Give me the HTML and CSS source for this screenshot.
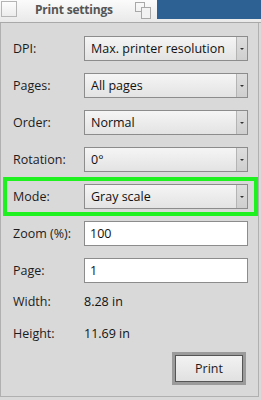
FILE: index.html
```html
<!DOCTYPE html>
<html>
<head>
<meta charset="utf-8">
<link rel="stylesheet" href="styles.css">
</head>
<body>
<div class="titlebar">
  <div class="tb-check"></div>
  <div class="tb-title">Print settings</div>
  <svg class="tb-icon" width="17" height="17" viewBox="0 0 17 17">
    <rect x="0.5" y="0.5" width="9" height="9" fill="none" stroke="#a8a8a8"/>
    <rect x="6.5" y="5.5" width="9" height="11" fill="#f2f2f2" stroke="#a8a8a8"/>
  </svg>
  <div class="tb-blue"></div>
</div>
<div class="panel">
  <div class="form">
    <div class="row"><span class="lbl">DPI:</span><div class="combo"><span class="val">Max. printer resolution</span><span class="btn"><i class="arrow"></i></span></div></div>
    <div class="row"><span class="lbl">Pages:</span><div class="combo"><span class="val">All pages</span><span class="btn"><i class="arrow"></i></span></div></div>
    <div class="row"><span class="lbl">Order:</span><div class="combo"><span class="val">Normal</span><span class="btn"><i class="arrow"></i></span></div></div>
    <div class="row"><span class="lbl">Rotation:</span><div class="combo"><span class="val">0°</span><span class="btn"><i class="arrow"></i></span></div></div>
    <div class="row hl"><span class="lbl">Mode:</span><div class="combo"><span class="val">Gray scale</span><span class="btn"><i class="arrow"></i></span></div></div>
    <div class="row"><span class="lbl">Zoom (%):</span><div class="input">100</div></div>
    <div class="row"><span class="lbl">Page:</span><div class="input">1</div></div>
    <div class="row info info-first"><span class="lbl">Width:</span><span class="ival">8.28 in</span></div>
    <div class="row info info-second"><span class="lbl">Height:</span><span class="ival">11.69 in</span></div>
  </div>
  <div class="actions"><button class="print">Print</button></div>
</div>
</body>
</html>
```
FILE: styles.css
```css
html, body {
  margin: 0;
  padding: 0;
  width: 261px;
  height: 400px;
  overflow: hidden;
  background: #d9d9d9;
  font-family: "Open Sans", "Noto Sans", sans-serif;
  font-size: 12.5px;
  color: #1c1c1c;
}
.titlebar {
  display: flex;
  align-items: flex-start;
  height: 22px;
  background: linear-gradient(#fbfbfb, #e9e9e9);
  border-bottom: 1px solid #a9a9a9;
  box-sizing: content-box;
}
.tb-check {
  width: 14px;
  height: 14px;
  margin: 1px 0 0 1px;
  border: 1px solid #b5b5b5;
  background: linear-gradient(#fdfdfd, #ececec);
}
.tb-title {
  margin-left: 18px;
  margin-top: 1px;
  font-weight: bold;
  font-size: 12px;
  letter-spacing: -0.2px;
  color: #555;
  width: 100px;
  flex: none;
}
.tb-icon {
  margin-top: 2px;
  flex: none;
}
.tb-blue {
  flex: 1;
  height: 19px;
  margin-left: 5px;
  background: #2e6193;
}
.panel {
  height: 374px;
  width: 259px;
  border: 1px solid #b0b0b0;
  border-top: none;
  box-sizing: border-box;
  display: flex;
  flex-direction: column;
  padding: 13px 11px 0 11px;
}
.form {
  display: flex;
  flex-direction: column;
  gap: 12px;
}
.row {
  display: grid;
  grid-template-columns: 71px 164px;
  align-items: center;
  height: 25px;
  padding-left: 1px;
}
.lbl {
  color: #1c1c1c;
}
.combo {
  height: 25px;
  box-sizing: border-box;
  border: 1px solid #8c8c8c;
  background: linear-gradient(#f5f5f5, #e3e3e3);
  display: flex;
  align-items: stretch;
}
.val {
  flex: 1;
  padding-left: 6px;
  display: flex;
  align-items: center;
  color: #111;
}
.btn {
  width: 10px;
  border-left: 1px solid #b4b4b4;
  background: linear-gradient(#dedede, #cfcfcf);
  display: flex;
  align-items: center;
  justify-content: center;
}
.arrow {
  width: 0;
  height: 0;
  border-left: 2px solid transparent;
  border-right: 2px solid transparent;
  border-top: 2px solid #333;
}
.hl {
  border: 4px solid #1ff01f;
  margin: -7px -11px -7px -9px;
  padding: 3px 7px 3px 6px;
  height: 25px;
  box-sizing: content-box;
}
.input {
  height: 25px;
  box-sizing: border-box;
  border: 1px solid #8c8c8c;
  background: #fff;
  padding-left: 5px;
  display: flex;
  align-items: center;
  color: #111;
}
.info {
  height: 18px;
}
.info-first {
  margin-top: -3px;
}
.info-second {
  margin-top: 2px;
}
.ival {
  color: #111;
}
.actions {
  display: flex;
  justify-content: flex-end;
  margin-top: 10px;
}
.print {
  width: 74px;
  height: 33px;
  box-sizing: border-box;
  border: 3px solid #9b9b9b;
  outline: 1px solid #555;
  outline-offset: -4px;
  background: linear-gradient(#f3f3f3, #e0e0e0);
  font-family: "Open Sans", "Noto Sans", sans-serif;
  font-size: 12.5px;
  color: #1c1c1c;
  padding: 0;
  margin-right: 1px;
}
```
